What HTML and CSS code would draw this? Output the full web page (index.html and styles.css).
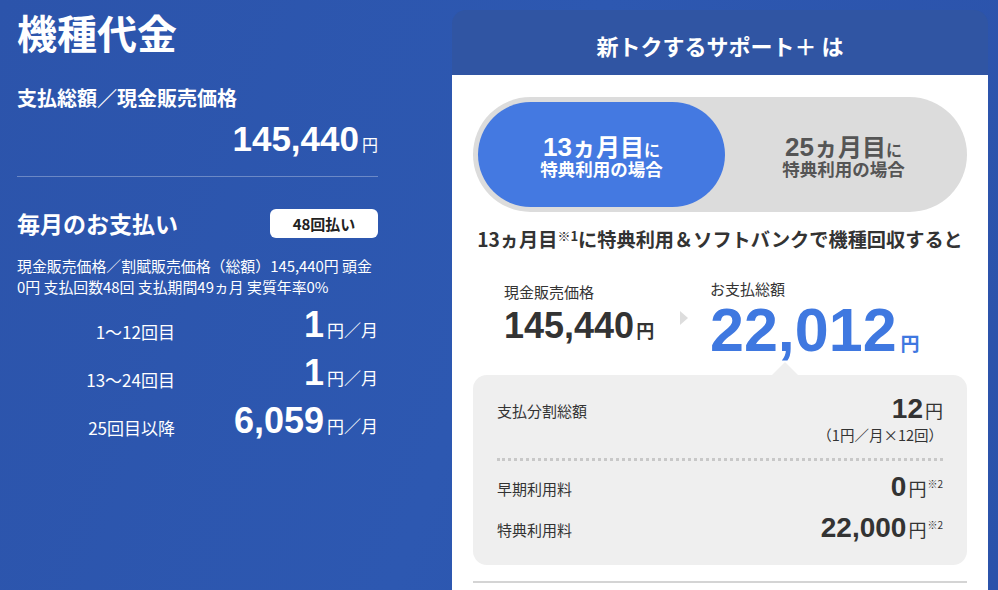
FILE: index.html
```html
<!DOCTYPE html>
<html lang="ja">
<head>
<meta charset="utf-8">
<link rel="stylesheet" href="styles.css">
</head>
<body>
<div class="page">
  <section class="left">
    <h1 class="title">機種代金</h1>
    <h2 class="subhead">支払総額／現金販売価格</h2>
    <div class="price"><span class="num">145,440</span><span class="yen">円</span></div>
    <hr class="divider">
    <div class="monthly-head">
      <h2 class="monthly-title">毎月のお支払い</h2>
      <span class="badge">48回払い</span>
    </div>
    <p class="desc">現金販売価格／割賦販売価格（総額）145,440円 頭金0円 支払回数48回 支払期間49ヵ月 実質年率0%</p>
    <div class="rows">
      <div class="row-label">1〜12回目</div>
      <div class="row-val"><span class="num">1</span><span class="unit">円／月</span></div>
      <div class="row-label">13〜24回目</div>
      <div class="row-val"><span class="num">1</span><span class="unit">円／月</span></div>
      <div class="row-label">25回目以降</div>
      <div class="row-val"><span class="num">6,059</span><span class="unit">円／月</span></div>
    </div>
  </section>

  <section class="card">
    <div class="card-head">新トクするサポート＋ は</div>
    <div class="card-body">
      <div class="toggle">
        <div class="opt active">
          <div class="opt-l1"><span class="n">13</span><span class="k">ヵ月目</span><span class="ni">に</span></div>
          <div class="opt-l2">特典利用の場合</div>
        </div>
        <div class="opt">
          <div class="opt-l1"><span class="n">25</span><span class="k">ヵ月目</span><span class="ni">に</span></div>
          <div class="opt-l2">特典利用の場合</div>
        </div>
      </div>
      <h3 class="lead">13ヵ月目<sup>※1</sup>に特典利用＆ソフトバンクで機種回収すると</h3>
      <div class="compare">
        <div class="cmp-a">
          <div class="cmp-label">現金販売価格</div>
          <div class="cmp-price"><span class="num">145,440</span><span class="yen">円</span></div>
        </div>
        <div class="arrow"></div>
        <div class="cmp-b">
          <div class="cmp-label">お支払総額</div>
          <div class="cmp-total"><span class="num">22,012</span><span class="yen">円</span></div>
        </div>
      </div>
      <div class="detail">
        <div class="d-row">
          <div class="d-label">支払分割総額</div>
          <div class="d-val">
            <div class="d-main"><span class="num">12</span><span class="yen">円</span></div>
            <div class="d-note">（1円／月×12回）</div>
          </div>
        </div>
        <div class="dots"></div>
        <div class="d-row">
          <div class="d-label">早期利用料</div>
          <div class="d-val d-main"><span class="num">0</span><span class="yen">円</span><span class="mark">※2</span></div>
        </div>
        <div class="d-row next">
          <div class="d-label">特典利用料</div>
          <div class="d-val d-main"><span class="num">22,000</span><span class="yen">円</span><span class="mark">※2</span></div>
        </div>
      </div>
      <div class="bottom-rule"></div>
    </div>
  </section>
</div>
</body>
</html>
```

FILE: styles.css
```css
* { box-sizing: border-box; }
html, body { margin: 0; padding: 0; }
body {
  width: 998px;
  height: 590px;
  overflow: hidden;
  background: linear-gradient(110deg, #2c54ab 0%, #2d58b1 50%, #2b52aa 100%);
  font-family: "Noto Sans CJK JP", "Noto Sans", sans-serif;
  color: #fff;
}
.page {
  display: flex;
  align-items: flex-start;
  padding-left: 17px;
}
.num { font-family: "Liberation Sans", "Noto Sans CJK JP", sans-serif; font-weight: 700; }

/* left */
.left { width: 361px; }
.title {
  margin: 0;
  padding-top: 9px;
  font-size: 40px;
  line-height: 46px;
  font-weight: 700;
}
.subhead {
  margin: 29px 0 0;
  font-size: 20px;
  line-height: 28px;
  font-weight: 700;
}
.price {
  margin-top: 9px;
  text-align: right;
  line-height: 40px;
}
.price .num { font-size: 35px; line-height: 1; }
.price .yen { font-size: 16px; margin-left: 3px; line-height: 1; }
.divider {
  margin: 12px 0 0;
  border: 0;
  height: 1px;
  background: rgba(255,255,255,0.3);
}
.monthly-head {
  margin-top: 31px;
  display: flex;
  align-items: center;
  justify-content: space-between;
  height: 30px;
}
.monthly-title {
  margin: 0;
  font-size: 23px;
  line-height: 30px;
  font-weight: 700;
}
.badge {
  width: 108px;
  height: 29px;
  background: #fff;
  border-radius: 6px;
  color: #222;
  font-size: 15px;
  font-weight: 700;
  line-height: 29px;
  text-align: center;
}
.desc {
  margin: 17px 0 0;
  font-size: 14.9px;
  line-height: 21px;
}
.rows {
  margin-top: 6px;
  display: grid;
  grid-template-columns: 158px 1fr;
  grid-auto-rows: 48px;
  align-items: center;
}
.row-label {
  text-align: right;
  font-size: 17px;
  line-height: 24px;
  padding-top: 10px;
}
.row-val { text-align: right; line-height: 40px; }
.row-val .num { font-size: 36px; }
.row-val .unit { font-size: 17px; margin-left: 3px; }

/* card */
.card {
  margin-left: 74px;
  margin-top: 10px;
  width: 536px;
  border-radius: 14px 14px 0 0;
  overflow: hidden;
}
.card-head {
  height: 65px;
  background: #3055a3;
  text-align: center;
  font-size: 22px;
  font-weight: 700;
  line-height: 70px;
}
.card-body {
  background: #fff;
  padding: 22px 21px 0;
  color: #333;
  height: 515px;
  overflow: hidden;
}
.toggle {
  height: 115px;
  background: #dcdcdc;
  border-radius: 58px;
  padding: 5px;
  display: flex;
}
.opt {
  flex: 1;
  display: flex;
  flex-direction: column;
  justify-content: center;
  align-items: center;
  color: #555;
  font-weight: 700;
  border-radius: 53px;
  padding-top: 3px;
}
.opt.active {
  flex: 0 0 247px;
  background: #4479e1;
  color: #fff;
}
.opt-l1 { line-height: 26px; height: 26px; }
.opt-l1 span { line-height: 1; }
.opt-l1 .n { font-family: "Liberation Sans", sans-serif; font-size: 26px; }
.opt-l1 .k { font-size: 24px; }
.opt-l1 .ni { font-size: 16px; }
.opt-l2 { font-size: 17.5px; line-height: 20px; margin-top: -1px; }
.lead {
  margin: 14px 0 0;
  text-align: center;
  font-size: 19.2px;
  line-height: 26px;
  font-weight: 700;
  color: #333;
}
.lead sup { font-size: 13px; vertical-align: 6px; line-height: 0; }
.compare {
  margin-top: 27px;
  display: flex;
  align-items: flex-start;
  padding-left: 31px;
}
.cmp-a { width: 176px; padding-top: 3px; }
.cmp-label { font-size: 15px; line-height: 20px; color: #333; }
.cmp-price { margin-top: 6px; line-height: 38px; height: 38px; color: #333; white-space: nowrap; }
.cmp-price span { line-height: 1; }
.cmp-price .num { font-size: 36px; }
.cmp-price .yen { font-size: 18px; margin-left: 2px; font-weight: 700; }
.arrow {
  flex: none;
  width: 0; height: 0;
  margin-top: 32px;
  border-left: 8px solid #ddd;
  border-top: 7px solid transparent;
  border-bottom: 7px solid transparent;
  margin-right: 22px;
}
.cmp-total { color: #3f78e0; line-height: 60px; height: 60px; margin-top: 1px; white-space: nowrap; }
.cmp-total span { line-height: 1; }
.cmp-total .num { font-size: 61px; }
.cmp-total .yen { font-size: 19px; font-weight: 700; margin-left: 4px; }
.detail {
  position: relative;
  margin-top: 15px;
  background: #efefef;
  border-radius: 14px;
  padding: 20px 24px 19px;
}
.detail::before {
  content: "";
  position: absolute;
  top: -13px;
  left: 299px;
  border-left: 13px solid transparent;
  border-right: 13px solid transparent;
  border-bottom: 13px solid #efefef;
}
.d-row {
  display: flex;
  justify-content: space-between;
  align-items: flex-start;
}
.d-row.next { margin-top: 9px; }
.d-label { font-size: 15px; line-height: 32px; color: #333; }
.d-val { text-align: right; color: #333; white-space: nowrap; }
.d-main { height: 32px; line-height: 32px; }
.d-main span { line-height: 1; }
.d-val .num { font-size: 28px; }
.d-val .yen { font-size: 18px; margin-left: 2px; }
.d-val .mark { font-size: 10px; vertical-align: 8px; margin-left: 1px; }
.d-note { font-size: 14.5px; line-height: 20px; margin-top: -2px; }
.dots {
  margin: 13px 0 12px;
  border-top: 3px dotted #c8c8c8;
}
.bottom-rule {
  margin-top: 16px;
  height: 2px;
  background: #d4d4d4;
}
```
